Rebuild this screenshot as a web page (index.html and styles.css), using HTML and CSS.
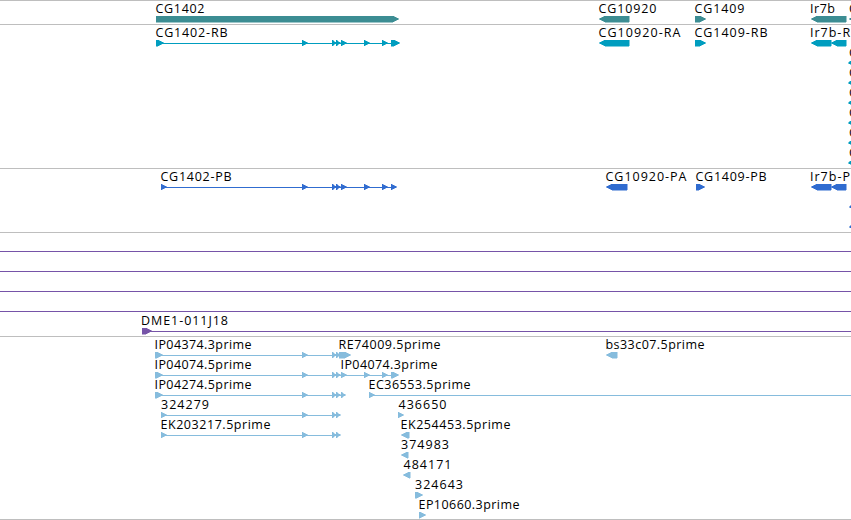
FILE: index.html
```html
<!DOCTYPE html>
<html lang="en">
<head>
<meta charset="utf-8">
<title>Genome browser</title>
<link rel="stylesheet" href="styles.css">
</head>
<body>
<main class="browser">
<section class="track genes">
<svg width="851" height="23" viewBox="0 1 851 23">
<text x="155.5" y="13" textLength="49">CG1402</text>
<text x="598.5" y="13" textLength="58">CG10920</text>
<text x="694.5" y="13" textLength="50">CG1409</text>
<text x="810" y="13" textLength="25">Ir7b</text>
<text x="849" y="13">CG</text>
<path d="M156 16h237l6 3-6 3H156zM629 16h-24l-6 3 6 3h24zM695 16h5l6 3-6 3h-5zM846 16h-29l-6 3 6 3h29zM855 16l-6 3 6 3z"/>
</svg>
</section>
<section class="track transcripts">
<svg width="851" height="143" viewBox="0 25 851 143">
<text x="155.5" y="37" textLength="72">CG1402-RB</text>
<text x="598.5" y="37" textLength="82">CG10920-RA</text>
<text x="694.5" y="37" textLength="73">CG1409-RB</text>
<text x="810" y="37" textLength="49">Ir7b-RA</text>
<text x="849" y="57">CG</text><text x="849" y="77">CG</text><text x="849" y="97">CG</text>
<text x="849" y="117">CG</text><text x="849" y="137">CG</text><text x="849" y="157">CG</text>
<path class="line" d="M156 43h243v1H156z"/>
<path d="M156 40h2l6 3-6 3h-2zM302 40l6 3-6 3zM332 40l5 3-5 3zM336 40l5 3-5 3zM341 40l6 3-6 3zM364 40l6 3-6 3zM382 40l6 3-6 3zM391 40h3l6 3-6 3h-3zM629 40h-24l-6 3 6 3h24zM695 40h5l6 3-6 3h-5zM831 40h-14l-6 3 6 3h14zM846 40h-9l-6 3 6 3h9z"/>
<path d="M852 60l-4 3 4 2zM852 80l-4 3 4 2zM852 100l-4 3 4 2zM852 120l-4 3 4 2zM852 140l-4 3 4 2zM852 160l-4 3 4 2z"/>
</svg>
</section>
<section class="track proteins">
<svg width="851" height="63" viewBox="0 169 851 63">
<text x="160.5" y="181" textLength="71">CG1402-PB</text>
<text x="605.5" y="181" textLength="81">CG10920-PA</text>
<text x="695.5" y="181" textLength="71">CG1409-PB</text>
<text x="810" y="181" textLength="49">Ir7b-PB</text>
<path class="line" d="M161 187h235v1H161z"/>
<path d="M161 184l6 3-6 3zM302 184l6 3-6 3zM332 184l5 3-5 3zM336 184l5 3-5 3zM341 184l6 3-6 3zM364 184l6 3-6 3zM382 184l6 3-6 3zM391 184l6 3-6 3zM627 184h-15l-6 3 6 3h15zM696 184h3l6 3-6 3h-3zM831 184h-14l-6 3 6 3h14zM846 184h-9l-6 3 6 3h9zM853 204l-4 3 4 2zM853 224l-4 3 4 2z"/>
</svg>
</section>
<section class="track clones">
<svg width="851" height="103" viewBox="0 233 851 103">
<path class="line" d="M0 251h851v1H0zM0 271h851v1H0zM0 291h851v1H0zM0 311h851v1H0zM142 331h709v1H142z"/>
<path d="M142 328h4l6 3-6 3h-4z"/>
<text x="141" y="325" textLength="87">DME1-011J18</text>
</svg>
</section>
<section class="track ests">
<svg width="851" height="182" viewBox="0 337 851 182">
<path class="line" d="M155 355h184v1H155zM155 375h237v1H155zM155 395h190v1H155zM161 415h179v1H161zM161 435h179v1H161zM369 395h482v1H369z"/>
<path d="M155 352h2l6 3-6 3h-2zM302 352l6 3-6 3zM332 352l5 3-5 3zM336 352l5 3-5 3zM339 352h6l6 3-6 3h-6z"/>
<path d="M155 372h2l6 3-6 3h-2zM302 372l6 3-6 3zM332 372l5 3-5 3zM336 372l5 3-5 3zM341 372l6 3-6 3zM364 372l6 3-6 3zM382 372l6 3-6 3zM391 372h2l6 3-6 3h-2z"/>
<path d="M155 392h2l6 3-6 3h-2zM302 392l6 3-6 3zM332 392l5 3-5 3zM336 392l5 3-5 3zM341 392l5 3-5 3zM369 392l6 3-6 3z"/>
<path d="M161 412l6 3-6 3zM302 412l6 3-6 3zM332 412l5 3-5 3zM336 412l5 3-5 3zM398 412l6 3-6 3z"/>
<path d="M161 432l6 3-6 3zM302 432l6 3-6 3zM332 432l5 3-5 3zM336 432l5 3-5 3zM409 432h-2l-6 3 6 3h2z"/>
<path d="M408 452h-1l-6 3 6 3h1zM410 472h-1l-6 3 6 3h1zM415 492h2l6 3-6 3h-2zM419 512h1l6 3-6 3h-1zM617 352h-5l-6 3 6 3h5z"/>
<text x="154.5" y="349" textLength="97">IP04374.3prime</text>
<text x="154.5" y="369" textLength="97">IP04074.5prime</text>
<text x="154.5" y="389" textLength="97">IP04274.5prime</text>
<text x="161" y="409" textLength="48">324279</text>
<text x="160.5" y="429" textLength="110">EK203217.5prime</text>
<text x="338.5" y="349" textLength="102">RE74009.5prime</text>
<text x="340.5" y="369" textLength="97">IP04074.3prime</text>
<text x="368.5" y="389" textLength="102">EC36553.5prime</text>
<text x="398.5" y="409" textLength="48">436650</text>
<text x="400.5" y="429" textLength="110">EK254453.5prime</text>
<text x="401" y="449" textLength="48">374983</text>
<text x="403.5" y="469" textLength="48">484171</text>
<text x="415" y="489" textLength="48">324643</text>
<text x="418.5" y="509" textLength="101">EP10660.3prime</text>
<text x="605.5" y="349" textLength="99">bs33c07.5prime</text>
</svg>
</section>
</main>
</body>
</html>
```
FILE: styles.css
```css
body {
  margin: 0;
  background: #fff;
  overflow: hidden;
}

.browser {
  display: flex;
  flex-direction: column;
  width: 851px;
  height: 520px;
  box-sizing: border-box;
  border-bottom: 1px solid #bebebe;
}

.track {
  border-top: 1px solid #bebebe;
  font: 12.5px "Open Sans", "DejaVu Sans", sans-serif;
}

.track svg {
  display: block;
}

.track text {
  fill: #000;
}

.track path {
  shape-rendering: crispEdges;
  stroke: currentColor;
  stroke-width: 0.5px;
}

.track .line {
  stroke: none;
}

.genes { fill: #3c8d93; color: #3c8d93; }
.transcripts { fill: #009dbf; color: #009dbf; }
.proteins { fill: #306cd0; color: #306cd0; }
.clones { fill: #7654a8; color: #7654a8; }
.ests { fill: #86bcdd; color: #86bcdd; }
```
